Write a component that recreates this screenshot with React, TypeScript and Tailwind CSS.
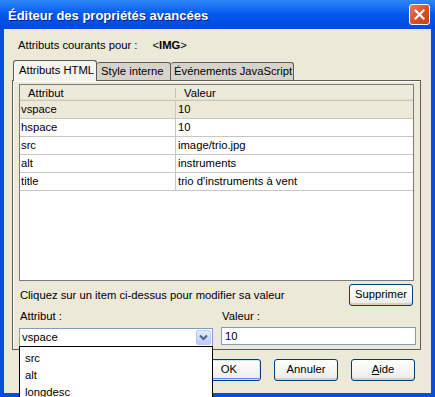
import React from 'react';

const rows = [
  { attr: 'vspace', value: '10', selected: true },
  { attr: 'hspace', value: '10' },
  { attr: 'src', value: 'image/trio.jpg' },
  { attr: 'alt', value: 'instruments' },
  { attr: 'title', value: "trio d'instruments à vent" },
];

const XpButton = ({ children, focused = false, width = 'w-[64px]' }: { children: React.ReactNode; focused?: boolean; width?: string }) => (
  <button
    className={`${width} h-[22px] rounded-[3px] border border-[#003C74] bg-gradient-to-b from-white to-[#ECEBE6] text-[11.25px] text-black leading-none flex items-center justify-center ${
      focused ? 'shadow-[inset_0_0_0_1px_#CEE7FF,inset_0_-2px_0_0_#6982EE]' : 'shadow-[inset_0_-2px_0_0_#D6D0C5]'
    }`}
  >
    {children}
  </button>
);

const App = () => {
  return (
    <div className="w-[435px] h-[397px] relative overflow-hidden bg-[#0A4CDC] font-['Liberation_Sans',Arial,sans-serif] text-[11.25px] text-black select-none">
      {/* title bar */}
      <div className="h-[29px] bg-gradient-to-b from-[#2F86FA] via-[#0058EE] to-[#0048DC] flex items-center justify-between pl-[8px] pr-[5px]">
        <span className="text-white font-bold text-[13px] pt-[2px] [text-shadow:1px_1px_#0F1F8A]">Éditeur des propriétés avancées</span>
        <div className="w-[21px] h-[21px] rounded-[3px] border border-white bg-gradient-to-br from-[#E97B5A] via-[#D8512D] to-[#C2401D] flex items-center justify-center">
          <svg width="11" height="11" viewBox="0 0 11 11">
            <path d="M1.5 1.5 L9.5 9.5 M9.5 1.5 L1.5 9.5" stroke="white" strokeWidth="2.2" strokeLinecap="square" />
          </svg>
        </div>
      </div>

      {/* body */}
      <div className="mx-[4px] h-[364px] bg-[#ECE9D8]">
        <div className="h-[31px] pt-[10px] pl-[14px] flex leading-[13px]">
          <span>Attributs courants pour :</span>
          <span className="ml-[15px]">
            &lt;<b>IMG</b>&gt;
          </span>
        </div>

        {/* tabs */}
        <div className="h-[20px] flex items-end pl-[9px] relative z-10">
          <div className="w-[84px] h-[21px] -mb-px border border-b-0 border-[#5B5B5B] rounded-t-[3px] bg-[#F4F3EE] pl-[5px] pt-[3px] leading-[13px]">
            Attributs HTML
          </div>
          <div className="w-[74px] h-[18px] border border-b-0 border-l-0 border-[#5B5B5B] rounded-t-[3px] bg-[#D6D3CB] pl-[4px] pt-[2px] leading-[13px]">
            Style interne
          </div>
          <div className="w-[123px] h-[18px] border border-b-0 border-l-0 border-[#5B5B5B] rounded-t-[3px] bg-[#D6D3CB] pl-[3px] pt-[2px] leading-[13px]">
            Événements JavaScript
          </div>
        </div>

        {/* panel */}
        <div className="ml-[8px] w-[409px] h-[270px] border border-[#5B5B5B] shadow-[inset_1px_1px_0_0_#FFFFFF] bg-[#ECE9D8]">
          {/* list view */}
          <div className="mt-[3px] ml-[6px] w-[395px] h-[197px] border border-[#7A7A7A] bg-white">
            <div className="h-[16px] flex bg-[#EBEADB] border-b border-[#CBC7B8] shadow-[inset_0_-1px_0_0_#E2DED0] leading-[13px]">
              <div className="w-[156px] pl-[8px] pt-[2px] relative">
                Attribut
                <span className="absolute right-0 top-[3px] w-px h-[10px] bg-[#C7C5B2]" />
              </div>
              <div className="flex-1 pl-[8px] pt-[2px]">Valeur</div>
            </div>
            {rows.map((r) => (
              <div
                key={r.attr}
                className={`h-[18px] flex border-b border-[#C9C7BE] leading-[13px] ${r.selected ? 'bg-[#ECE9D8]' : 'bg-white'}`}
              >
                <div className="w-[156px] pl-[1px] flex items-center border-r border-[#C9C7BE]">{r.attr}</div>
                <div className="flex-1 pl-[2px] flex items-center">{r.value}</div>
              </div>
            ))}
          </div>

          <div className="mt-[3px] h-[22px] flex items-center justify-between pl-[7px] pr-[7px]">
            <span>Cliquez sur un item ci-dessus pour modifier sa valeur</span>
            <XpButton>Supprimer</XpButton>
          </div>

          <div className="mt-[3px] h-[14px] flex leading-[14px] pl-[7px]">
            <span className="w-[202px]">Attribut :</span>
            <span>Valeur :</span>
          </div>

          <div className="mt-[4px] flex items-start pl-[6px]">
            <div className="mt-px w-[194px] h-[19px] border border-[#7F9DB9] bg-white flex items-center justify-between pl-[2px] pr-px">
              <span className="leading-[13px]">vspace</span>
              <div className="w-[15px] h-[15px] rounded-[2px] border border-[#B9CBF3] bg-gradient-to-b from-[#E3EBFE] to-[#B8CCF9] flex items-center justify-center">
                <svg width="9" height="7" viewBox="0 0 9 7">
                  <path d="M1 1.5 L4.5 5 L8 1.5" fill="none" stroke="#4D6185" strokeWidth="2" />
                </svg>
              </div>
            </div>
            <div className="ml-[8px] w-[195px] h-[18px] border border-[#7F9DB9] bg-white flex items-center pl-[3px]">
              <span className="leading-[13px]">10</span>
            </div>
          </div>
        </div>

        {/* buttons */}
        <div className="mt-[9px] flex justify-end gap-[13px] pr-[16px]">
          <XpButton focused width="w-[64px]">OK</XpButton>
          <XpButton>Annuler</XpButton>
          <XpButton>
            <span>
              <u>A</u>ide
            </span>
          </XpButton>
        </div>
      </div>

      {/* open combo list */}
      <div className="absolute left-[19px] top-[346px] w-[194px] h-[60px] border border-black bg-white pt-[3px] leading-[13px]">
        <div className="h-[17px] pl-[5px] flex items-center">src</div>
        <div className="h-[17px] pl-[5px] flex items-center">alt</div>
        <div className="h-[17px] pl-[5px] flex items-center">longdesc</div>
      </div>
    </div>
  );
};

export default App;
